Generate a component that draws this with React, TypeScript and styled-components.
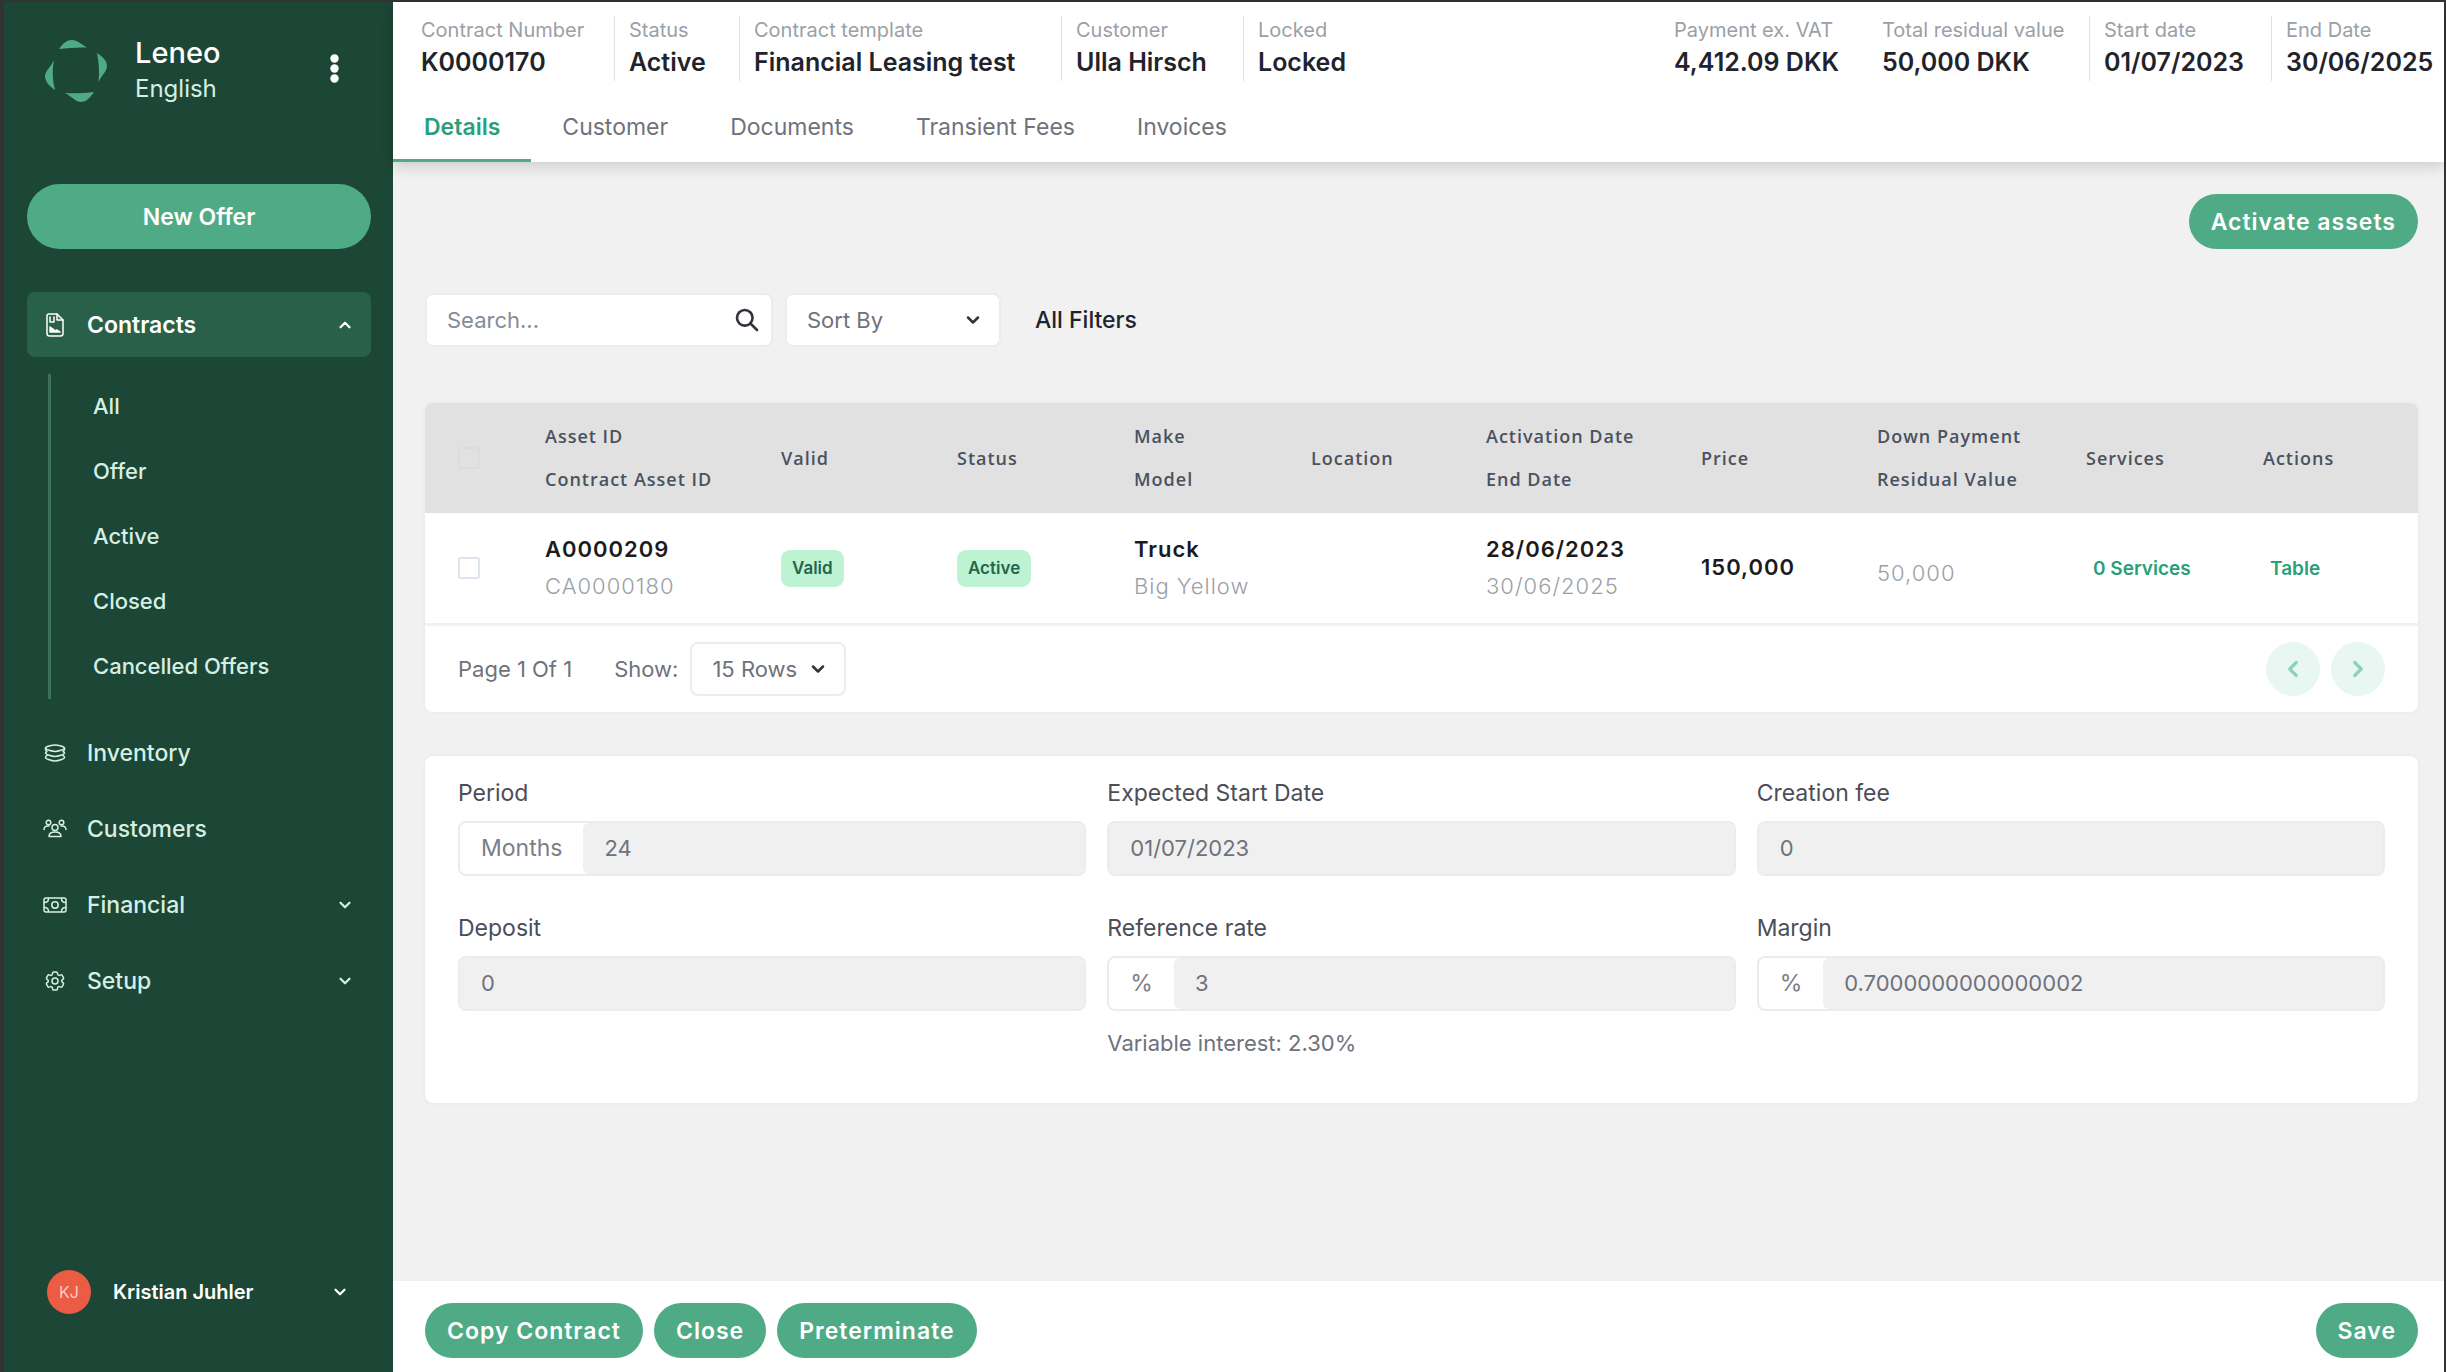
import React from "react";
import styled, { createGlobalStyle } from "styled-components";
import { ChevronDown, ChevronLeft, ChevronRight, ChevronUp } from "lucide-react";
import { HiOutlineCog6Tooth } from "react-icons/hi2";

const sans = `Inter, "Open Sans", "Liberation Sans", sans-serif`;

const color = {
  forest: "#1c4635",
  forestLight: "#286049",
  green: "#4fab85",
  greenText: "#2a9f78",
  ink: "#1f232b",
  muted: "#6f727b",
  faint: "#9b9fa7",
  page: "#f1f1f1",
  line: "#ebecf1",
};

const GlobalStyle = createGlobalStyle`
  *, *::before, *::after { box-sizing: border-box; }
  body { margin: 0; font-family: ${sans}; font-size: 22px; color: ${color.muted}; }
  button, input, select { font: inherit; color: inherit; }
  button { border: 0; padding: 0; background: none; cursor: pointer; }
  a { color: inherit; text-decoration: none; }
`;

const Shell = styled.div`
  display: flex;
  min-height: 100vh;
  background: ${color.page};
  border: solid #333;
  border-width: 2px 2px 0 4px;
`;

/* ---------- sidebar ---------- */

const Sidebar = styled.aside`
  flex: 0 0 389px;
  display: flex;
  flex-direction: column;
  padding: 37px 22px 58px 23px;
  background: ${color.forest};
  color: #d5efe4;
`;

const Brand = styled.div`
  display: flex;
  align-items: center;
  gap: 28px;
  height: 64px;
  padding: 0 32px 0 18px;
`;

const BrandText = styled.div`
  flex: 1;
`;

const BrandName = styled.div`
  font-size: 29px;
  line-height: 36px;
  font-weight: 500;
  color: #fff;
`;

const BrandLanguage = styled.div`
  font-size: 24px;
  line-height: 36px;
`;

const NewOffer = styled.button`
  height: 65px;
  margin: 81px 0 43px;
  border-radius: 33px;
  background: ${color.green};
  color: #fff;
  font-size: 23px;
  font-weight: 600;
`;

const NavItem = styled.button<{ $open?: boolean }>`
  display: flex;
  align-items: center;
  width: 100%;
  height: ${(p) => (p.$open ? 65 : 76)}px;
  padding: 0 17px 0 16px;
  gap: 20px;
  border-radius: 8px;
  text-align: left;
  font-size: 23px;
  font-weight: ${(p) => (p.$open ? 600 : 500)};
  background: ${(p) => (p.$open ? color.forestLight : "transparent")};
  color: ${(p) => (p.$open ? "#fff" : "#d5efe4")};

  > span {
    flex: 1;
  }
`;

const SubNav = styled.nav`
  display: flex;
  flex-direction: column;
  margin: 17px 0 16px 21px;
  padding-left: 42px;
  border-left: 3px solid #3d705c;
`;

const SubLink = styled.a`
  line-height: 65px;
  font-size: 22px;
  font-weight: 500;
`;

const User = styled.button`
  display: flex;
  align-items: center;
  gap: 22px;
  margin-top: auto;
  padding: 0 22px 0 20px;
  color: #fff;
  font-size: 20px;
  font-weight: 600;
  text-align: left;

  > span:nth-child(2) {
    flex: 1;
  }
`;

const Avatar = styled.span`
  width: 44px;
  height: 44px;
  border-radius: 50%;
  background: #ec5b43;
  color: #f9cfc6;
  font-size: 16px;
  font-weight: 400;
  line-height: 44px;
  text-align: center;
`;

/* ---------- header ---------- */

const Main = styled.main`
  flex: 1;
  min-width: 0;
  display: flex;
  flex-direction: column;
`;

const Header = styled.header`
  height: 160px;
  display: flex;
  flex-direction: column;
  justify-content: space-between;
  padding-top: 14px;
  background: #fff;
  box-shadow: 0 4px 14px rgba(0, 0, 0, 0.16);
`;

const Stats = styled.div`
  display: flex;
  justify-content: space-between;
  padding: 0 18px 0 28px;
`;

const StatGroup = styled.dl`
  display: flex;
  gap: 14px;
  margin: 0;
`;

const Stat = styled.div<{ $width: number; $rule?: boolean }>`
  width: ${(p) => p.$width}px;
  height: 65px;
  border-right: 1px solid ${(p) => (p.$rule ? "#dfe1e6" : "transparent")};
  white-space: nowrap;

  &:last-child {
    border: 0;
  }
`;

const StatLabel = styled.dt`
  font-size: 20px;
  line-height: 28px;
  color: ${color.faint};
`;

const StatValue = styled.dd`
  margin: 0;
  font-size: 25px;
  line-height: 36px;
  font-weight: 600;
  color: ${color.ink};
`;

const Tabs = styled.nav`
  display: flex;
`;

const Tab = styled.a<{ $active?: boolean }>`
  height: 71px;
  padding: 0 31px;
  line-height: 72px;
  font-size: 23px;
  font-weight: ${(p) => (p.$active ? 600 : 400)};
  color: ${(p) => (p.$active ? color.greenText : color.muted)};
  border-bottom: 3px solid ${(p) => (p.$active ? color.green : "transparent")};
`;

/* ---------- content ---------- */

const Content = styled.section`
  flex: 1;
  display: flex;
  flex-direction: column;
  gap: 44px;
  padding: 32px 26px 44px 32px;
`;

const Pill = styled.button`
  height: 55px;
  padding: 0 22px;
  border-radius: 28px;
  background: ${color.green};
  color: #fff;
  font-size: 23px;
  font-weight: 600;
  letter-spacing: 1px;
  white-space: nowrap;
`;

const ActionRow = styled.div`
  display: flex;
  justify-content: flex-end;
`;

const Toolbar = styled.div`
  display: flex;
  align-items: center;
  gap: 12px;
  margin-bottom: 12px;
`;

const Box = styled.div<{ $width: number; $inset?: number }>`
  display: flex;
  align-items: center;
  position: relative;
  width: ${(p) => p.$width}px;
  height: 54px;
  background: #fff;
  border: 2px solid ${color.line};
  border-radius: 8px;

  > svg {
    position: absolute;
    right: ${(p) => p.$inset ?? 16}px;
    pointer-events: none;
    color: #30343c;
  }
`;

const SearchInput = styled.input`
  width: 100%;
  height: 100%;
  padding: 0 50px 0 20px;
  border: 0;
  outline: 0;
  background: none;

  &::placeholder {
    color: #868b97;
    opacity: 1;
  }
`;

const Select = styled.select`
  width: 100%;
  height: 100%;
  padding: 0 20px;
  border: 0;
  outline: 0;
  appearance: none;
  background: none;
`;

const Filters = styled.button`
  margin-left: 22px;
  font-size: 23px;
  font-weight: 500;
  color: ${color.ink};
`;

const Card = styled.div`
  background: #fff;
  border-radius: 8px;
  overflow: hidden;
  box-shadow: 0 0 4px rgba(0, 0, 0, 0.05);
`;

const Table = styled.table`
  width: 100%;
  table-layout: fixed;
  border-collapse: collapse;

  th,
  td {
    padding: 0;
    text-align: left;
    white-space: nowrap;
  }

  th:first-child,
  td:first-child {
    padding-left: 33px;
  }
`;

const Head = styled.thead`
  background: #e1e1e1;
  color: #4a5260;

  th {
    height: 110px;
    font-family: "Open Sans", "Noto Sans", sans-serif;
    font-size: 18px;
    line-height: 43px;
    font-weight: 600;
    letter-spacing: 1px;
  }
`;

const Body = styled.tbody`
  td {
    height: 111px;
    border-bottom: 3px solid #f0f1f3;
    line-height: 37px;
  }
`;

const Check = styled.input<{ $faint?: boolean }>`
  display: block;
  appearance: none;
  width: 22px;
  height: 22px;
  margin: 0;
  border: 2px solid ${(p) => (p.$faint ? "#d8dde2" : "#dce4ee")};
  border-radius: 3px;
`;

const Strong = styled.div`
  font-size: 22px;
  font-weight: 600;
  letter-spacing: 1px;
  color: #1b1b1d;
`;

const Soft = styled.div<{ $low?: boolean }>`
  font-size: 22px;
  font-weight: 300;
  letter-spacing: 1px;
  color: ${color.faint};
  padding-top: ${(p) => (p.$low ? 12 : 0)}px;
`;

const Badge = styled.span`
  display: inline-block;
  height: 37px;
  padding: 0 11px;
  border-radius: 9px;
  background: #bdf3d3;
  color: #24664c;
  font-size: 17px;
  font-weight: 600;
`;

const CellLink = styled.a`
  padding-left: 7px;
  font-size: 19px;
  font-weight: 600;
  color: ${color.greenText};
`;

const TableFoot = styled.div`
  display: flex;
  align-items: center;
  height: 86px;
  padding: 0 33px;
`;

const RowsLabel = styled.label`
  margin: 0 12px 0 42px;
`;

const Pager = styled.div`
  display: flex;
  gap: 11px;
  margin-left: auto;
`;

const PageButton = styled.button`
  display: grid;
  place-items: center;
  width: 54px;
  height: 54px;
  border-radius: 50%;
  background: #e9f7f2;
  color: #8fd1b8;
`;

/* ---------- form ---------- */

const Form = styled.form`
  display: grid;
  grid-template-columns: repeat(3, 1fr);
  gap: 35px 21px;
  padding: 20px 33px 42px;
`;

const FieldLabel = styled.label`
  display: block;
  padding-bottom: 11px;
  font-size: 23px;
  line-height: 34px;
  color: #4b4e58;
`;

const FieldRow = styled.div`
  display: flex;
  height: 55px;
  border: 2px solid ${color.line};
  border-radius: 8px;
`;

const Addon = styled.span`
  display: flex;
  align-items: center;
  padding: 0 21px;
  font-size: 23px;
  color: #7b7e87;
`;

const FieldInput = styled.input`
  flex: 1;
  min-width: 0;
  padding: 0 21px;
  border: 0;
  border-radius: 6px;
  outline: 0;
  background: #f0f0f0;
  color: ${color.muted};
`;

const Note = styled.p`
  margin: 14px 0 0;
  line-height: 36px;
`;

const Footer = styled.footer`
  display: flex;
  gap: 11px;
  padding: 22px 26px 14px 32px;
  background: #fff;

  > :last-child {
    margin-left: auto;
  }
`;

/* ---------- drawings ---------- */

const Logo = () => (
  <svg width="62" height="62" viewBox="0 0 62 62" fill={color.green}>
    <path d="M14 9C18 3 22 0 27 0s9 4 15 7.500Q28 7 14 9Z" />
    <path d="M52 13c6 4 10 8 10 13s-5 9-8.500 16Q55 28 52 13Z" />
    <path d="M20 53q14 1 29-1c-4 6-8 10-13 10s-9-5-16-9Z" />
    <path d="M9 20Q6 35 10 50C4 46 0 41 0 36s6-9 9-16Z" />
  </svg>
);

const Dots = () => (
  <svg width="9" height="29" viewBox="0 0 9 29" fill="#fff">
    <circle cx="4.500" cy="4.500" r="4.200" />
    <circle cx="4.500" cy="14.500" r="4.200" />
    <circle cx="4.500" cy="24.500" r="4.200" />
  </svg>
);

const Glyph = ({ children }: { children: React.ReactNode }) => (
  <svg width="24" height="24" viewBox="0 0 24 24" fill="none" stroke="currentColor" strokeWidth="1.500" strokeLinejoin="round" strokeLinecap="round">
    {children}
  </svg>
);

const ContractIcon = () => (
  <Glyph>
    <path d="M6 1h8l6 6v13.500a2.500 2.500 0 0 1-2.500 2.500H6.500A2.500 2.500 0 0 1 4 20.500V3a2 2 0 0 1 2-2Z" />
    <path d="M14 1v6h6M7 4v5h4V4" />
    <path d="M7 19v-5l3 2 2 2 2-1 3 2Z" fill="currentColor" />
  </Glyph>
);

const InventoryIcon = () => (
  <Glyph>
    <path d="M12 4c3 0 9.500 1.500 9.500 3S15 10.500 12 10.500 2.500 8.500 2.500 7 9 4 12 4Z" />
    <path d="M2.500 7v1.500c0 1 1 1.500 1.500 2-1 .5-1.500 1-1.500 1.500 0 1.500 6.500 3.500 9.500 3.500s9.500-2 9.500-3.500c0-.5-.5-1-1.500-1.500.5-.5 1.500-1 1.500-2V7" />
    <path d="M4 14.500c-1 .5-1.500 1-1.500 2 0 1.500 6.500 3.500 9.500 3.500s9.500-2 9.500-3.500c0-1-.5-1.500-1.500-2" />
  </Glyph>
);

const CustomersIcon = () => (
  <Glyph>
    <circle cx="5.500" cy="5.500" r="2.300" />
    <circle cx="18.500" cy="5.500" r="2.300" />
    <circle cx="12" cy="10.500" r="3" />
    <path d="M1 12.500c0-2.500 2-4 5-3.500M23 12.500c0-2.500-2-4-5-3.500M6 19.500c0-3 2-4.500 6-4.500s6 1.500 6 4.500Z" />
  </Glyph>
);

const FinancialIcon = () => (
  <Glyph>
    <rect x="1" y="5" width="22" height="14" rx="2" />
    <path d="M1.500 9.500c2.500 0 4-1.500 4-4M22.500 9.500c-2.500 0-4-1.500-4-4M1.500 14.500c2.500 0 4 1.500 4 4M22.500 14.500c-2.500 0-4 1.500-4 4" />
    <circle cx="12" cy="12" r="3.200" />
  </Glyph>
);

const SearchIcon = () => (
  <svg width="24" height="24" viewBox="0 0 24 24" fill="none" stroke="currentColor" strokeWidth="2.600" strokeLinecap="round">
    <circle cx="9.800" cy="9.800" r="7.800" />
    <path d="m15.500 15.500 6.500 6.500" />
  </svg>
);

/* ---------- data ---------- */

const leftStats = [
  { label: "Contract Number", value: "K0000170", width: 194 },
  { label: "Status", value: "Active", width: 111 },
  { label: "Contract template", value: "Financial Leasing test", width: 308 },
  { label: "Customer", value: "Ulla Hirsch", width: 168 },
  { label: "Locked", value: "Locked", width: 111 },
];

const rightStats = [
  { label: "Payment ex. VAT", value: "4,412.09 DKK", width: 194 },
  { label: "Total residual value", value: "50,000 DKK", width: 208 },
  { label: "Start date", value: "01/07/2023", width: 168 },
  { label: "End Date", value: "30/06/2025", width: 140 },
];

const subLinks = ["All", "Offer", "Active", "Closed", "Cancelled Offers"];
const tabs = ["Details", "Customer", "Documents", "Transient Fees", "Invoices"];
const columnWidths = [120, 236, 176, 177, 177, 175, 215, 176, 209, 177, 155];
const headings = [
  ["Asset ID", "Contract Asset ID"],
  ["Valid"],
  ["Status"],
  ["Make", "Model"],
  ["Location"],
  ["Activation Date", "End Date"],
  ["Price"],
  ["Down Payment", "Residual Value"],
  ["Services"],
  ["Actions"],
];

const fields = [
  { id: "period", label: "Period", value: "24", addon: "Months" },
  { id: "start", label: "Expected Start Date", value: "01/07/2023" },
  { id: "fee", label: "Creation fee", value: "0" },
  { id: "deposit", label: "Deposit", value: "0" },
  { id: "rate", label: "Reference rate", value: "3", addon: "%", note: "Variable interest: 2.30%" },
  { id: "margin", label: "Margin", value: "0.7000000000000002", addon: "%" },
];

export default function App() {
  return (
    <>
      <GlobalStyle />
      <Shell>
        <Sidebar>
          <Brand>
            <Logo />
            <BrandText>
              <BrandName>Leneo</BrandName>
              <BrandLanguage>English</BrandLanguage>
            </BrandText>
            <button aria-label="More options">
              <Dots />
            </button>
          </Brand>
          <NewOffer>New Offer</NewOffer>
          <NavItem $open>
            <ContractIcon />
            <span>Contracts</span>
            <ChevronUp size={18} strokeWidth={3} />
          </NavItem>
          <SubNav>
            {subLinks.map((name) => (
              <SubLink key={name} href="#">
                {name}
              </SubLink>
            ))}
          </SubNav>
          <NavItem>
            <InventoryIcon />
            <span>Inventory</span>
          </NavItem>
          <NavItem>
            <CustomersIcon />
            <span>Customers</span>
          </NavItem>
          <NavItem>
            <FinancialIcon />
            <span>Financial</span>
            <ChevronDown size={18} strokeWidth={3} />
          </NavItem>
          <NavItem>
            <HiOutlineCog6Tooth size={24} />
            <span>Setup</span>
            <ChevronDown size={18} strokeWidth={3} />
          </NavItem>
          <User>
            <Avatar>KJ</Avatar>
            <span>Kristian Juhler</span>
            <ChevronDown size={18} strokeWidth={3} />
          </User>
        </Sidebar>

        <Main>
          <Header>
            <Stats>
              <StatGroup>
                {leftStats.map((stat) => (
                  <Stat key={stat.label} $width={stat.width} $rule>
                    <StatLabel>{stat.label}</StatLabel>
                    <StatValue>{stat.value}</StatValue>
                  </Stat>
                ))}
              </StatGroup>
              <StatGroup>
                {rightStats.map((stat, i) => (
                  <Stat key={stat.label} $width={stat.width} $rule={i > 0}>
                    <StatLabel>{stat.label}</StatLabel>
                    <StatValue>{stat.value}</StatValue>
                  </Stat>
                ))}
              </StatGroup>
            </Stats>
            <Tabs>
              {tabs.map((name, i) => (
                <Tab key={name} href="#" $active={i === 0}>
                  {name}
                </Tab>
              ))}
            </Tabs>
          </Header>

          <Content>
            <ActionRow>
              <Pill>Activate assets</Pill>
            </ActionRow>

            <Toolbar>
              <Box $width={348} $inset={12}>
                <SearchInput type="search" placeholder="Search..." aria-label="Search assets" />
                <SearchIcon />
              </Box>
              <Box $width={216}>
                <Select aria-label="Sort by">
                  <option>Sort By</option>
                </Select>
                <ChevronDown size={20} strokeWidth={3} />
              </Box>
              <Filters>All Filters</Filters>
            </Toolbar>

            <Card>
              <Table>
                <colgroup>
                  {columnWidths.map((width, i) => (
                    <col key={i} width={width} />
                  ))}
                </colgroup>
                <Head>
                  <tr>
                    <th>
                      <Check type="checkbox" $faint aria-label="Select all assets" />
                    </th>
                    {headings.map((lines) => (
                      <th key={lines[0]}>
                        {lines.map((line) => (
                          <div key={line}>{line}</div>
                        ))}
                      </th>
                    ))}
                  </tr>
                </Head>
                <Body>
                  <tr>
                    <td>
                      <Check type="checkbox" aria-label="Select asset A0000209" />
                    </td>
                    <td>
                      <Strong>A0000209</Strong>
                      <Soft>CA0000180</Soft>
                    </td>
                    <td>
                      <Badge>Valid</Badge>
                    </td>
                    <td>
                      <Badge>Active</Badge>
                    </td>
                    <td>
                      <Strong>Truck</Strong>
                      <Soft>Big Yellow</Soft>
                    </td>
                    <td />
                    <td>
                      <Strong>28/06/2023</Strong>
                      <Soft>30/06/2025</Soft>
                    </td>
                    <td>
                      <Strong>150,000</Strong>
                    </td>
                    <td>
                      <Soft $low>50,000</Soft>
                    </td>
                    <td>
                      <CellLink href="#">0 Services</CellLink>
                    </td>
                    <td>
                      <CellLink href="#">Table</CellLink>
                    </td>
                  </tr>
                </Body>
              </Table>
              <TableFoot>
                <span>Page 1 Of 1</span>
                <RowsLabel htmlFor="rows">Show:</RowsLabel>
                <Box $width={156}>
                  <Select id="rows">
                    <option>15 Rows</option>
                  </Select>
                  <ChevronDown size={20} strokeWidth={3} />
                </Box>
                <Pager>
                  <PageButton aria-label="Previous page">
                    <ChevronLeft size={26} strokeWidth={3} />
                  </PageButton>
                  <PageButton aria-label="Next page">
                    <ChevronRight size={26} strokeWidth={3} />
                  </PageButton>
                </Pager>
              </TableFoot>
            </Card>

            <Card>
              <Form>
                {fields.map((field) => (
                  <div key={field.id}>
                    <FieldLabel htmlFor={field.id}>{field.label}</FieldLabel>
                    <FieldRow>
                      {field.addon && <Addon>{field.addon}</Addon>}
                      <FieldInput id={field.id} defaultValue={field.value} readOnly />
                    </FieldRow>
                    {field.note && <Note>{field.note}</Note>}
                  </div>
                ))}
              </Form>
            </Card>
          </Content>

          <Footer>
            <Pill>Copy Contract</Pill>
            <Pill>Close</Pill>
            <Pill>Preterminate</Pill>
            <Pill>Save</Pill>
          </Footer>
        </Main>
      </Shell>
    </>
  );
}
